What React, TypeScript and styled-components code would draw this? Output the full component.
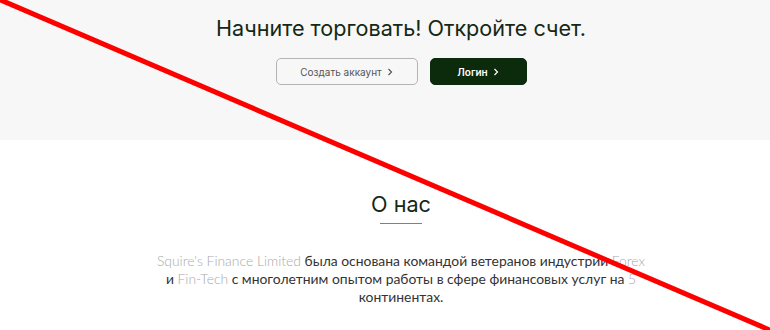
import React from 'react';
import styled, { createGlobalStyle } from 'styled-components';

const GlobalStyle = createGlobalStyle`
  body {
    margin: 0;
    background: #fff;
    font-family: 'Inter', 'Liberation Sans', sans-serif;
  }
`;

const Page = styled.div`
  position: relative;
  width: 770px;
  height: 330px;
  overflow: hidden;
`;

const Hero = styled.section`
  display: flex;
  flex-direction: column;
  align-items: center;
  height: 140px;
  box-sizing: border-box;
  padding: 14px 0 0 32px;
  background: #f7f7f7;
`;

const Title = styled.h2`
  margin: 0;
  font-family: 'Inter', sans-serif;
  font-weight: 400;
  font-size: 21.6px;
  line-height: 28px;
  color: #142814;
`;

const Actions = styled.div`
  display: flex;
  gap: 12px;
  margin-top: 16px;
`;

const Button = styled.a<{ $primary?: boolean }>`
  display: flex;
  align-items: center;
  justify-content: center;
  gap: 5px;
  height: 27px;
  box-sizing: border-box;
  width: ${(p) => (p.$primary ? '97px' : '142px')};
  border-radius: 5px;
  font-family: 'Inter', 'Liberation Sans', sans-serif;
  font-size: 10px;
  font-weight: ${(p) => (p.$primary ? 600 : 400)};
  color: ${(p) => (p.$primary ? '#ffffff' : '#555')};
  background: ${(p) => (p.$primary ? '#0c2b0c' : 'transparent')};
  border: 1px solid ${(p) => (p.$primary ? '#0c2b0c' : '#b4b4b4')};
`;

const About = styled.section`
  display: flex;
  flex-direction: column;
  align-items: center;
  padding: 50px 0 0 32px;
`;

const Heading = styled.h2`
  margin: 0;
  font-family: 'Inter', sans-serif;
  font-weight: 400;
  font-size: 21.6px;
  line-height: 28px;
  color: #142814;
`;

const Rule = styled.div`
  width: 42px;
  height: 1px;
  margin-top: 5px;
  background: #6a8f6a;
`;

const Text = styled.p`
  margin: 28px 0 0;
  width: 494px;
  text-align: center;
  font-family: 'Lato', sans-serif;
  font-size: 13.9px;
  line-height: 18px;
  color: #333;
`;

const Muted = styled.span`
  color: #aaa;
  font-weight: 300;
  white-space: nowrap;
`;

const Strike = styled.svg`
  position: absolute;
  inset: 0;
  pointer-events: none;
`;

const Chevron = () => (
  <svg width="6" height="8" viewBox="0 0 6 8" fill="none">
    <path d="M1.5 1l3 3-3 3" stroke="currentColor" strokeWidth="1.2" />
  </svg>
);

export default function App() {
  return (
    <Page>
      <GlobalStyle />
      <Hero>
        <Title>Начните торговать! Откройте счет.</Title>
        <Actions>
          <Button>Создать аккаунт <Chevron /></Button>
          <Button $primary>Логин <Chevron /></Button>
        </Actions>
      </Hero>
      <About>
        <Heading>О нас</Heading>
        <Rule />
        <Text>
          <Muted>Squire's Finance Limited</Muted> была основана командой ветеранов индустрии <Muted>Forex</Muted> и{' '}
          <Muted>Fin-Tech</Muted> с многолетним опытом работы в сфере финансовых услуг на <Muted>5</Muted> континентах.
        </Text>
      </About>
      <Strike width="770" height="330" viewBox="0 0 770 330">
        <line x1="-4" y1="-2" x2="772" y2="331" stroke="#ff0000" strokeWidth="5" />
      </Strike>
    </Page>
  );
}
